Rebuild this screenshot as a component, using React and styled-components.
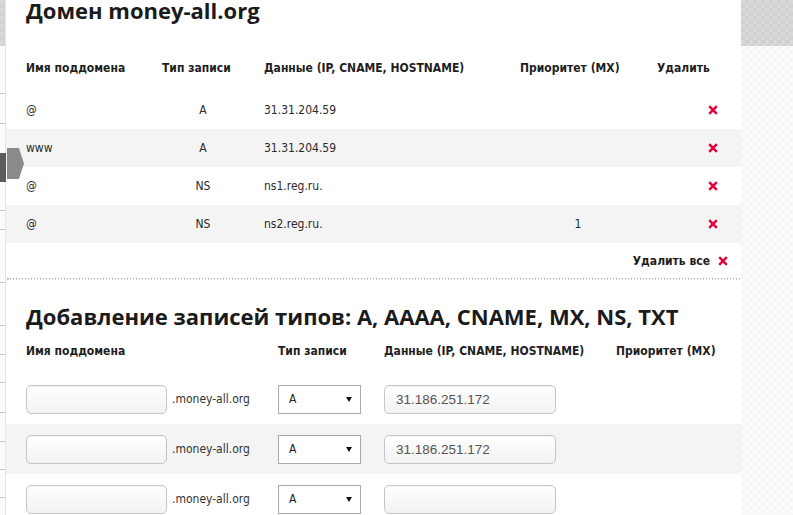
import React from "react";
import styled, { createGlobalStyle } from "styled-components";

const BODY = '"DejaVu Sans Condensed", "DejaVu Sans", Verdana, sans-serif';
const TITLE = '"Open Sans", "Noto Sans", sans-serif';
const ARIAL = '"Liberation Sans", Arial, sans-serif';

const GlobalStyle = createGlobalStyle`
  html, body { margin: 0; padding: 0; }
  body {
    width: 793px;
    height: 515px;
    overflow: hidden;
    font-family: ${BODY};
    color: #222;
    background: #fafafa;
  }
  * { box-sizing: border-box; }
`;

const checker = (a, b) => `
  background-color: ${a};
  background-image:
    linear-gradient(45deg, ${b} 25%, transparent 25%, transparent 75%, ${b} 75%),
    linear-gradient(45deg, ${b} 25%, transparent 25%, transparent 75%, ${b} 75%);
  background-size: 8px 8px;
  background-position: 0 0, 4px 4px;
`;

const Page = styled.div`
  position: relative;
  display: flex;
  align-items: flex-start;
  width: 793px;
  height: 515px;
  overflow: hidden;
`;

const Side = styled.div`
  flex: ${(p) => (p.$grow ? "1" : "none")};
  align-self: stretch;
  width: ${(p) => (p.$grow ? "auto" : "6px")};
  display: flex;
  flex-direction: column;
  ${(p) => (p.$grow ? "box-shadow: inset 2px 0 2px rgba(0,0,0,0.05);" : "border-right: 1px solid #e6e6e6;")}
`;

const TopBand = styled.div`
  height: 46px;
  flex: none;
  ${checker("#d9d9d9", "#d1d1d1")}
`;

const LowerBand = styled.div`
  flex: 1;
  ${checker("#fbfbfb", "#f6f6f6")}
`;

const StripCell = styled.div`
  flex: none;
  border-bottom: 1px solid #c9c9c9;
  background: #fcfcfc;
`;

const Tab = styled.div`
  position: absolute;
  left: 0;
  top: 153px;
  width: 6px;
  height: 29px;
  background: #5c5c5c;
`;

const TabArrow = styled.div`
  position: absolute;
  left: 7px;
  top: 148px;
  width: 17px;
  height: 31px;
  background: #8a8a8a;
  clip-path: polygon(0 0, 70% 0, 100% 50%, 70% 100%, 0 100%);
`;

const Panel = styled.div`
  flex: none;
  width: 735px;
  min-height: 515px;
  background: #fff;
  display: flex;
  flex-direction: column;
  & > * { flex-shrink: 0; }
`;

const Title = styled.h1`
  margin: ${(p) => p.$mt}px 0 0;
  padding: 0 20px;
  height: 20px;
  font-family: ${TITLE};
  font-weight: 700;
  font-size: 22px;
  line-height: 20px;
  color: #1b1b1b;
  white-space: nowrap;
`;

const Grid = styled.div`
  display: grid;
  grid-template-columns: ${(p) => p.$cols};
  align-items: center;
  height: ${(p) => p.$h}px;
  margin-top: ${(p) => p.$mt || 0}px;
  padding: 0 20px;
  background: ${(p) => (p.$shade ? "#f4f4f4" : "#fff")};
`;

const Rows = styled.div`
  margin-top: ${(p) => p.$mt}px;
`;

const HeadCell = styled.div`
  font-weight: 700;
  font-size: 12px;
  color: #1e1e1e;
  white-space: nowrap;
  padding-left: ${(p) => p.$pl || 0}px;
`;

const Cell = styled.div`
  font-size: 12px;
  color: #2a2a2a;
  white-space: nowrap;
  width: ${(p) => (p.$w ? `${p.$w}px` : "auto")};
  text-align: ${(p) => p.$align || "left"};
  padding-right: ${(p) => p.$pr || 0}px;
  display: ${(p) => (p.$flex ? "flex" : "block")};
  justify-content: flex-end;
  align-items: center;
`;

const DeleteAll = styled.div`
  height: 35px;
  display: flex;
  align-items: center;
  justify-content: flex-end;
  gap: 8px;
  padding-right: 13px;
  font-weight: 700;
  font-size: 12px;
  color: #1e1e1e;
`;

const Dotted = styled.div`
  height: 2px;
  margin-left: 1px;
  background-image: repeating-linear-gradient(to right, #a8a8a8 0 1.5px, transparent 1.5px 3px);
  background-size: 100% 1.5px;
  background-repeat: no-repeat;
`;

const FieldGroup = styled.div`
  display: flex;
  align-items: center;
  gap: 5px;
`;

const TextInput = styled.input`
  width: ${(p) => p.$w}px;
  height: 29px;
  border: 1px solid #c6c6c6;
  border-radius: 5px;
  background: linear-gradient(to bottom, #ffffff, #f2f2f2);
  box-shadow: inset 0 1px 1px rgba(0, 0, 0, 0.04);
  padding: 0 11px;
  font-family: ${ARIAL};
  font-size: 13.5px;
  color: #555;
  outline: none;
`;

const Suffix = styled.span`
  font-size: 12px;
  color: #333;
`;

const SelectBox = styled.div`
  width: 83px;
  height: 29px;
  border: 1px solid #a9a9a9;
  background: #fff;
  display: flex;
  align-items: center;
  justify-content: space-between;
  padding: 0 8px 0 10px;
  font-size: 12px;
  color: #222;
`;

const RedX = () => (
  <svg width="10" height="10" viewBox="0 0 10 10" aria-hidden="true">
    <path d="M1.2 1.2 L8.8 8.8 M8.8 1.2 L1.2 8.8" stroke="#e6003a" strokeWidth="2.5" />
  </svg>
);

const Caret = () => (
  <svg width="6" height="5" viewBox="0 0 6 5" aria-hidden="true">
    <path d="M0 0 H6 L3 5 Z" fill="#111" />
  </svg>
);

const records = [
  { name: "@", type: "A", data: "31.31.204.59", prio: "" },
  { name: "www", type: "A", data: "31.31.204.59", prio: "" },
  { name: "@", type: "NS", data: "ns1.reg.ru.", prio: "" },
  { name: "@", type: "NS", data: "ns2.reg.ru.", prio: "1" },
];

const addRows = ["31.186.251.172", "31.186.251.172", ""];

const stripLines = [48, 30, 87, 19, 53, 43, 29, 28, 30, 29, 28, 28];

const TABLE_COLS = "136px 102px 256px 116px 1fr";
const ADD_COLS = "252px 106px 232px 1fr";

export default function App() {
  return (
    <>
      <GlobalStyle />
      <Page>
        <Side>
          <TopBand />
          {stripLines.map((h, i) => (
            <StripCell key={i} style={{ height: h }} />
          ))}
        </Side>

        <Panel>
          <Title $mt={0}>Домен money-all.org</Title>

          <Grid $cols={TABLE_COLS} $h={38} $mt={29}>
            <HeadCell>Имя поддомена</HeadCell>
            <HeadCell>Тип записи</HeadCell>
            <HeadCell>Данные (IP, CNAME, HOSTNAME)</HeadCell>
            <HeadCell>Приоритет (MX)</HeadCell>
            <HeadCell $pl={21}>Удалить</HeadCell>
          </Grid>

          <Rows $mt={4}>
            {records.map((r, i) => (
              <Grid key={i} $cols={TABLE_COLS} $h={38} $shade={i % 2 === 1}>
                <Cell>{r.name}</Cell>
                <Cell $w={82} $align="center">{r.type}</Cell>
                <Cell>{r.data}</Cell>
                <Cell $align="center">{r.prio}</Cell>
                <Cell $flex $pr={3}>
                  <RedX />
                </Cell>
              </Grid>
            ))}
          </Rows>

          <DeleteAll>
            <span>Удалить все</span>
            <RedX />
          </DeleteAll>
          <Dotted />

          <Title $mt={26}>Добавление записей типов: A, AAAA, CNAME, MX, NS, TXT</Title>

          <Grid $cols={ADD_COLS} $h={24} $mt={13}>
            <HeadCell>Имя поддомена</HeadCell>
            <HeadCell>Тип записи</HeadCell>
            <HeadCell>Данные (IP, CNAME, HOSTNAME)</HeadCell>
            <HeadCell>Приоритет (MX)</HeadCell>
          </Grid>

          <Rows $mt={11}>
            {addRows.map((v, i) => (
              <Grid key={i} $cols={ADD_COLS} $h={50} $shade={i % 2 === 1}>
                <FieldGroup>
                  <TextInput $w={141} defaultValue="" />
                  <Suffix>.money-all.org</Suffix>
                </FieldGroup>
                <SelectBox>
                  <span>A</span>
                  <Caret />
                </SelectBox>
                <TextInput $w={172} defaultValue={v} />
                <div />
              </Grid>
            ))}
          </Rows>
        </Panel>

        <Side $grow>
          <TopBand />
          <LowerBand />
        </Side>

        <Tab />
        <TabArrow />
      </Page>
    </>
  );
}
